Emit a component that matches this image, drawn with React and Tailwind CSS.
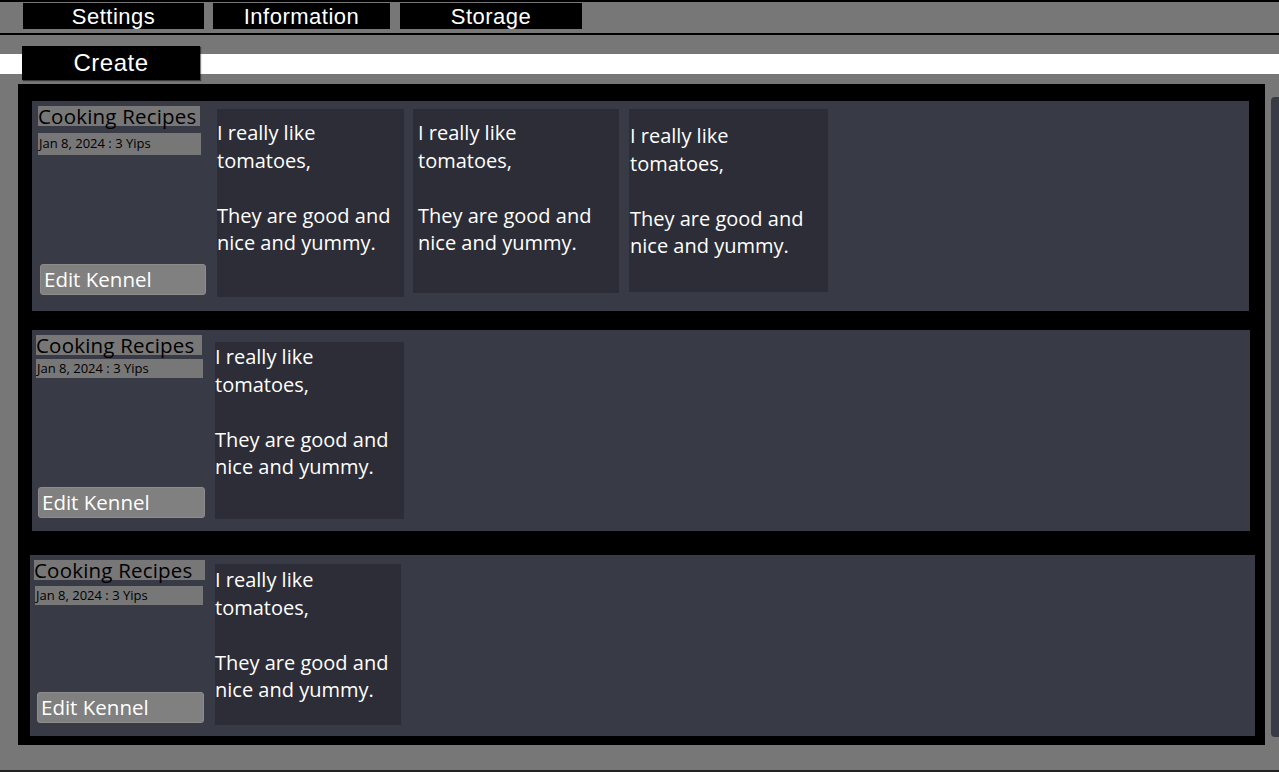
import React from "react";

const bodyFont = { fontFamily: "'Open Sans', Lato, sans-serif" };
const tabFont = { fontFamily: "'Liberation Sans', Arial, sans-serif" };

function TextBox({ cls, textCls }) {
  return (
    <div className={`bg-[#2c2d37] text-white text-[20px] leading-[27.5px] ${cls}`}>
      <div className={textCls}>
        <div>I really like</div>
        <div>tomatoes,</div>
        <div>&nbsp;</div>
        <div className="whitespace-nowrap">They are good and</div>
        <div className="whitespace-nowrap">nice and yummy.</div>
      </div>
    </div>
  );
}

function LeftCol({ cls, titleCls, dateCls, btnCls }) {
  return (
    <div className={`flex flex-col shrink-0 ${cls}`}>
      <div className={`bg-[#777777] text-black text-[20.5px] leading-[20px] h-[20px] whitespace-nowrap tracking-[0.2px] ${titleCls}`}>
        Cooking Recipes
      </div>
      <div className={`bg-[#777777] text-black text-[13px] flex items-center whitespace-nowrap ${dateCls}`}>
        <span className="pl-[1px]">Jan 8, 2024 : 3 Yips</span>
      </div>
      <div className="flex-1" />
      <div className={`bg-[#808080] text-white text-[20.5px] rounded-[3px] border border-[#8c8c8c] flex items-center pl-[3px] whitespace-nowrap ${btnCls}`}>
        Edit Kennel
      </div>
    </div>
  );
}

export default function App() {
  return (
    <div className="w-[1279px] h-[772px] bg-[#777777] overflow-hidden flex flex-col relative" style={bodyFont}>
      <div className="h-[2px] bg-black" />
      {/* tabs */}
      <div className="flex pl-[23px] pt-[1px] h-[27px]" style={tabFont}>
        <div className="w-[181px] h-[26px] bg-black text-white text-[22px] tracking-[0.5px] flex items-center justify-center">Settings</div>
        <div className="ml-[9px] w-[177px] h-[26px] bg-black text-white text-[22px] tracking-[0.5px] flex items-center justify-center">Information</div>
        <div className="ml-[10px] w-[182px] h-[26px] bg-black text-white text-[22px] tracking-[0.5px] flex items-center justify-center">Storage</div>
      </div>
      <div className="mt-[4px] h-[2px] bg-black" />
      {/* create row */}
      <div className="mt-[11px] h-[35px] bg-[linear-gradient(to_bottom,transparent_8px,#ffffff_8px,#ffffff_28px,transparent_28px)]">
        <div
          className="ml-[22px] w-[178px] h-[34px] bg-black text-white text-[24px] tracking-[0.5px] flex items-center justify-center shadow-[1px_1px_1px_rgba(0,0,0,0.5)]"
          style={tabFont}
        >
          Create
        </div>
      </div>
      {/* main */}
      <div className="mt-[3px] flex items-start">
        <div className="ml-[18px] w-[1247px] h-[661px] bg-black flex flex-col pt-[17px]">
          {/* card 1 */}
          <div className="ml-[14px] w-[1217px] h-[210px] bg-[#383a45] flex items-start">
            <LeftCol
              cls="ml-[6px] mt-[5px] w-[168px] h-[189px]"
              titleCls="w-[162px]"
              dateCls="mt-[7px] w-[163px] h-[22px]"
              btnCls="ml-[2px] w-[166px] h-[31px]"
            />
            <TextBox cls="ml-[11px] mt-[8px] w-[187px] h-[188px]" textCls="pt-[10px]" />
            <TextBox cls="ml-[9px] mt-[8px] w-[206px] h-[184px]" textCls="pt-[10px] pl-[5px]" />
            <TextBox cls="ml-[10px] mt-[8px] w-[199px] h-[183px]" textCls="pt-[13px] pl-[1px]" />
          </div>
          {/* card 2 */}
          <div className="ml-[14px] mt-[19px] w-[1218px] h-[201px] bg-[#383a45] flex items-start">
            <LeftCol
              cls="ml-[4px] mt-[5px] w-[169px] h-[183px]"
              titleCls="w-[166px]"
              dateCls="mt-[4px] w-[167px] h-[19px]"
              btnCls="ml-[2px] w-[167px] h-[31px]"
            />
            <TextBox cls="ml-[10px] mt-[12px] w-[189px] h-[177px]" textCls="pt-[1px]" />
          </div>
          {/* card 3 */}
          <div className="ml-[12px] mt-[24px] w-[1225px] h-[181px] bg-[#383a45] flex items-start">
            <LeftCol
              cls="ml-[4px] mt-[5px] w-[171px] h-[163px]"
              titleCls="w-[171px]"
              dateCls="mt-[6px] ml-[1px] w-[168px] h-[19px]"
              btnCls="ml-[3px] w-[167px] h-[31px]"
            />
            <TextBox cls="ml-[10px] mt-[9px] w-[186px] h-[161px]" textCls="pt-[2px]" />
          </div>
        </div>
        <div className="ml-[6px] mt-[13px] w-[8px] h-[640px] bg-[#383a45] rounded-l-[4px]" />
      </div>
      <div className="absolute left-0 right-0 bottom-0 h-[2px] bg-[#222]" />
    </div>
  );
}
